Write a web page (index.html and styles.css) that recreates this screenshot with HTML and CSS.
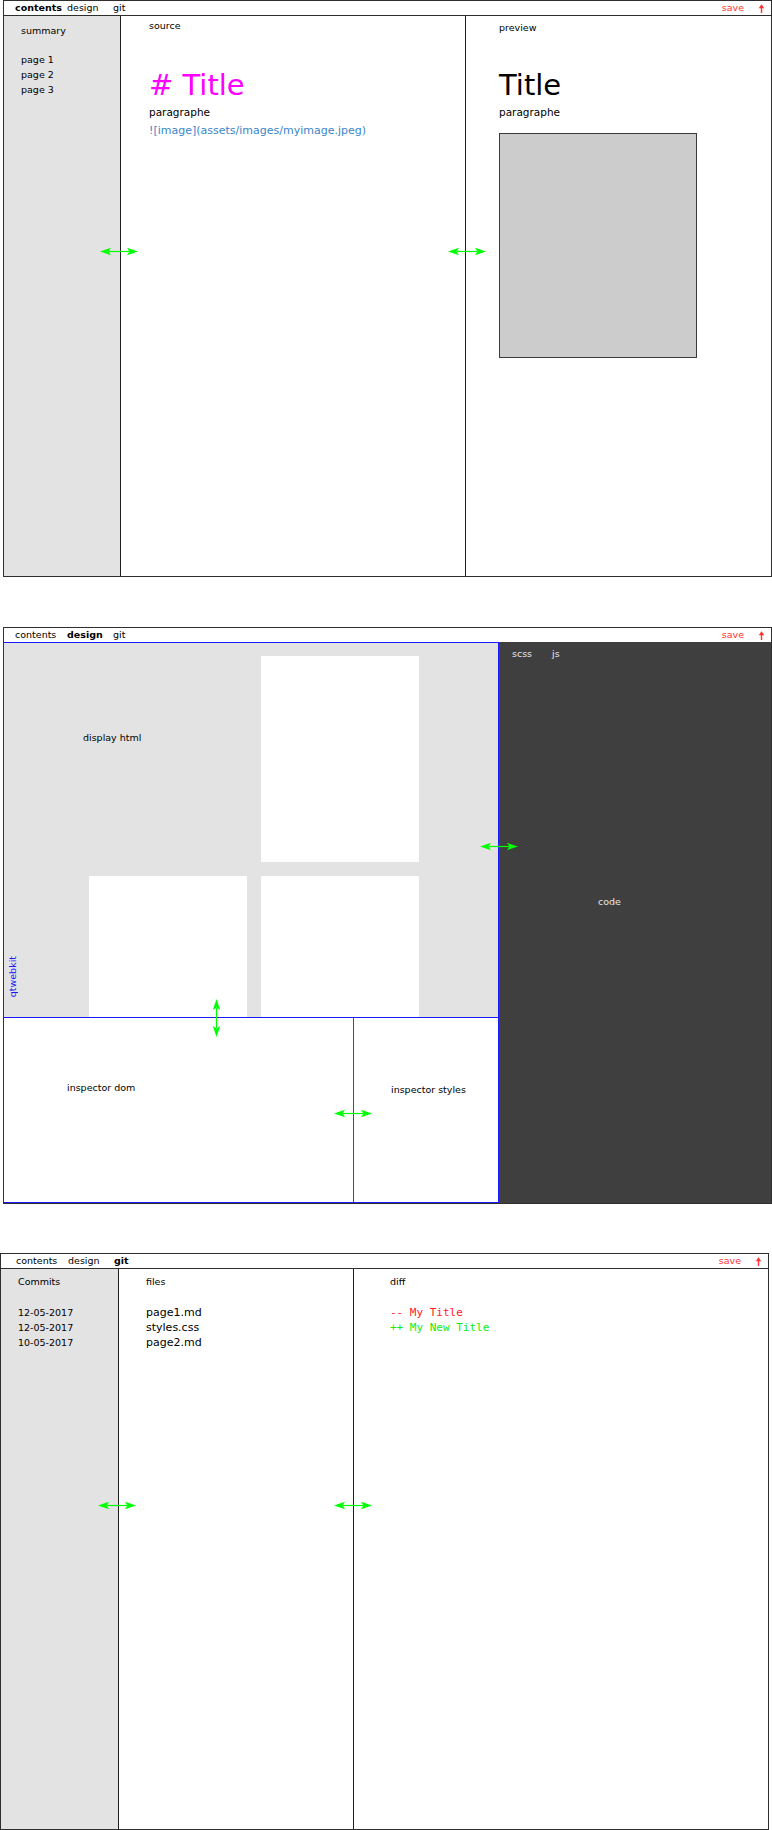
FILE: index.html
```html
<!DOCTYPE html>
<html>
<head>
<meta charset="utf-8">
<title>Mockup</title>
<link rel="stylesheet" href="styles.css">
</head>
<body>

<section class="frame frame-contents">
  <header class="bar">
    <span class="tab tab-contents active">contents</span>
    <span class="tab tab-design">design</span>
    <span class="tab tab-git">git</span>
    <span class="save">save</span>
    <svg class="upload" width="7" height="9" viewBox="0 0 7 9"><path d="M3.5 0.3L6.3 4.2H4.2V9H2.8V4.2H0.7Z" fill="#ff3333"/></svg>
  </header>
  <div class="body">
    <aside class="col sidebar">
      <div class="summary">summary</div>
      <ul class="list pages">
        <li>page 1</li>
        <li>page 2</li>
        <li>page 3</li>
      </ul>
    </aside>
    <div class="col source">
      <div class="label">source</div>
      <div class="md-title">&#35; Title</div>
      <div class="para">paragraphe</div>
      <div class="md-link">![image](assets/images/myimage.jpeg)</div>
    </div>
    <div class="col preview">
      <div class="label">preview</div>
      <h1 class="pv-title">Title</h1>
      <p class="para">paragraphe</p>
      <div class="pv-image"></div>
    </div>
    <svg class="harrow ha-c1" width="38" height="9" viewBox="0 0 38 9"><path d="M9 4.5H29" stroke="#00ff00" stroke-width="1.2"/><path d="M0 4.5L11 0.8L8.6 4.5L11 8.2Z M38 4.5L27 0.8L29.4 4.5L27 8.2Z" fill="#00ff00"/></svg>
    <svg class="harrow ha-c2" width="38" height="9" viewBox="0 0 38 9"><path d="M9 4.5H29" stroke="#00ff00" stroke-width="1.2"/><path d="M0 4.5L11 0.8L8.6 4.5L11 8.2Z M38 4.5L27 0.8L29.4 4.5L27 8.2Z" fill="#00ff00"/></svg>
  </div>
</section>

<section class="frame frame-design">
  <header class="bar bar-plain">
    <span class="tab tab-contents">contents</span>
    <span class="tab tab-design active">design</span>
    <span class="tab tab-git">git</span>
    <span class="save">save</span>
    <svg class="upload" width="7" height="9" viewBox="0 0 7 9"><path d="M3.5 0.3L6.3 4.2H4.2V9H2.8V4.2H0.7Z" fill="#ff3333"/></svg>
  </header>
  <div class="body body-design">
    <div class="webkit">
      <div class="view">
        <div class="view-label">display html</div>
        <div class="page-box box-a"></div>
        <div class="page-box box-b"></div>
        <div class="page-box box-c"></div>
        <div class="qtwebkit">qtwebkit</div>
      </div>
      <div class="inspector">
        <div class="insp-dom">inspector dom</div>
        <div class="insp-styles">inspector styles</div>
      </div>
      <svg class="varrow va-d1" width="9" height="38" viewBox="0 0 9 38"><path d="M4.5 9V29" stroke="#00ff00" stroke-width="1.2"/><path d="M4.5 0L0.8 11L4.5 8.6L8.2 11Z M4.5 38L0.8 27L4.5 29.4L8.2 27Z" fill="#00ff00"/></svg>
      <svg class="harrow ha-d2" width="38" height="9" viewBox="0 0 38 9"><path d="M9 4.5H29" stroke="#00ff00" stroke-width="1.2"/><path d="M0 4.5L11 0.8L8.6 4.5L11 8.2Z M38 4.5L27 0.8L29.4 4.5L27 8.2Z" fill="#00ff00"/></svg>
    </div>
    <div class="code-panel">
      <div class="code-tabs"><span>scss</span><span>js</span></div>
      <div class="code-label">code</div>
    </div>
    <svg class="harrow ha-d1" width="38" height="9" viewBox="0 0 38 9"><path d="M9 4.5H29" stroke="#00ff00" stroke-width="1.2"/><path d="M0 4.5L11 0.8L8.6 4.5L11 8.2Z M38 4.5L27 0.8L29.4 4.5L27 8.2Z" fill="#00ff00"/></svg>
  </div>
</section>

<section class="frame frame-git">
  <header class="bar">
    <span class="tab tab-contents">contents</span>
    <span class="tab tab-design">design</span>
    <span class="tab tab-git active">git</span>
    <span class="save">save</span>
    <svg class="upload" width="7" height="9" viewBox="0 0 7 9"><path d="M3.5 0.3L6.3 4.2H4.2V9H2.8V4.2H0.7Z" fill="#ff3333"/></svg>
  </header>
  <div class="body">
    <aside class="col sidebar sidebar-git">
      <div class="label">Commits</div>
      <ul class="list commits">
        <li>12-05-2017</li>
        <li>12-05-2017</li>
        <li>10-05-2017</li>
      </ul>
    </aside>
    <div class="col files">
      <div class="label">files</div>
      <ul class="list file-list">
        <li>page1.md</li>
        <li>styles.css</li>
        <li>page2.md</li>
      </ul>
    </div>
    <div class="col diff">
      <div class="label">diff</div>
      <div class="diff-lines">
        <div class="del">-- My Title</div>
        <div class="add">++ My New Title</div>
      </div>
    </div>
    <svg class="harrow ha-g1" width="38" height="9" viewBox="0 0 38 9"><path d="M9 4.5H29" stroke="#00ff00" stroke-width="1.2"/><path d="M0 4.5L11 0.8L8.6 4.5L11 8.2Z M38 4.5L27 0.8L29.4 4.5L27 8.2Z" fill="#00ff00"/></svg>
    <svg class="harrow ha-g2" width="38" height="9" viewBox="0 0 38 9"><path d="M9 4.5H29" stroke="#00ff00" stroke-width="1.2"/><path d="M0 4.5L11 0.8L8.6 4.5L11 8.2Z M38 4.5L27 0.8L29.4 4.5L27 8.2Z" fill="#00ff00"/></svg>
  </div>
</section>

</body>
</html>
```

FILE: styles.css
```css
* { box-sizing: border-box; }

html, body {
  margin: 0;
  padding: 0;
  background: #ffffff;
}

body {
  width: 772px;
  font-family: "DejaVu Sans", sans-serif;
  font-size: 9.5px;
  color: #000;
}

/* ---------- frames ---------- */
.frame {
  width: 769px;
  height: 577px;
  border: 1px solid #2e2e2e;
  display: flex;
  flex-direction: column;
}

.frame-contents { margin-left: 3px; }
.frame-design { margin-left: 3px; margin-top: 50px; border-left-color: #1a1aff; }
.frame-git { margin-left: 0; margin-top: 49px; }

/* ---------- top bar ---------- */
.bar {
  height: 15px;
  flex: none;
  display: flex;
  align-items: center;
  padding: 0 6px 0 11px;
  border-bottom: 1px solid #2e2e2e;
  line-height: 14px;
}

.bar-plain {
  height: 14px;
  border-bottom: none;
}

.frame-git .bar { padding-left: 15px; }

.tab { white-space: nowrap; }
.tab-contents { width: 52px; }
.tab-design { width: 46px; }
.tab.active { font-weight: bold; }

.save {
  margin-left: auto;
  color: #ff3333;
}

.upload {
  display: block;
  margin-left: 14px;
}

/* ---------- bodies ---------- */
.body {
  flex: 1;
  display: flex;
  position: relative;
  min-height: 0;
}

.col {
  height: 100%;
}

.sidebar {
  width: 117px;
  flex: none;
  background: #e3e3e3;
  border-right: 1px solid #1e1e1e;
  padding: 7px 0 0 17px;
  line-height: 15px;
}

.list {
  list-style: none;
  margin: 0;
  padding: 0;
}

.pages { margin-top: 14px; }

.label { line-height: 12px; }

.source {
  width: 345px;
  flex: none;
  border-right: 1px solid #1e1e1e;
  padding: 4px 0 0 28px;
}

.md-title {
  margin-top: 36px;
  font-size: 29px;
  line-height: 34px;
  color: #ff00ff;
}

.para {
  margin: 3px 0 0 0;
  font-size: 10.5px;
  line-height: 14px;
  color: #000;
}

.md-link {
  margin-top: 5px;
  font-size: 11px;
  line-height: 14px;
  color: #3a86c8;
}

.preview {
  flex: 1;
  padding: 6px 0 0 33px;
}

.pv-title {
  margin: 34px 0 0 0;
  font-size: 29px;
  line-height: 34px;
  font-weight: normal;
  color: #000;
}

.pv-image {
  margin-top: 14px;
  width: 198px;
  height: 225px;
  background: #cccccc;
  border: 1px solid #3a3a3a;
}

/* ---------- splitter arrows (overlays) ---------- */
.harrow, .varrow {
  position: absolute;
  display: block;
}

.ha-c1 { left: 96px; top: 231px; }
.ha-c2 { left: 444px; top: 231px; }

.ha-d1 { left: 476px; top: 200px; }
.va-d1 { left: 208px; top: 356px; }
.ha-d2 { left: 330px; top: 466px; }

.ha-g1 { left: 97px; top: 232px; }
.ha-g2 { left: 333px; top: 232px; }

/* ---------- design section ---------- */
.webkit {
  width: 495px;
  flex: none;
  position: relative;
  display: flex;
  flex-direction: column;
  border-top: 1px solid #1a1aff;
  border-right: 1px solid #1a1aff;
  border-bottom: 1px solid #1a1aff;
}

.view {
  height: 375px;
  flex: none;
  position: relative;
  background: #e3e3e3;
  border-bottom: 1px solid #1a1aff;
  display: grid;
  grid-template-columns: 158px 158px;
  grid-template-rows: 206px 1fr;
  column-gap: 14px;
  row-gap: 14px;
  padding: 13px 0 0 85px;
}

.page-box { background: #ffffff; }
.box-a { grid-column: 2; grid-row: 1; }
.box-b { grid-column: 1; grid-row: 2; }
.box-c { grid-column: 2; grid-row: 2; }

.view-label {
  grid-column: 1;
  grid-row: 1;
  margin: 76px 0 0 -6px;
  line-height: 12px;
  align-self: start;
}

.qtwebkit {
  position: absolute;
  left: 3px;
  bottom: 20px;
  writing-mode: vertical-rl;
  transform: rotate(180deg);
  line-height: 12px;
  color: #1a1aff;
}

.inspector {
  flex: 1;
  display: flex;
  background: #fff;
}

.insp-dom {
  width: 350px;
  flex: none;
  border-right: 1px solid #3a3aff;
  padding: 64px 0 0 63px;
  line-height: 12px;
}

.insp-styles {
  flex: 1;
  padding: 66px 0 0 37px;
  line-height: 12px;
}

.code-panel {
  flex: 1;
  background: #3f3f3f;
  color: #e6e6e6;
  padding: 6px 0 0 13px;
  line-height: 12px;
}

.code-tabs {
  display: flex;
  gap: 20px;
}

.code-label {
  margin: 236px 0 0 86px;
}

/* ---------- git section ---------- */
.sidebar-git {
  width: 118px;
  padding: 7px 0 0 17px;
}

.commits {
  margin-top: 17px;
  line-height: 15px;
}

.files {
  width: 235px;
  flex: none;
  border-right: 1px solid #1e1e1e;
  padding: 7px 0 0 27px;
}

.file-list {
  margin-top: 17px;
  font-size: 11px;
  line-height: 15px;
}

.diff {
  flex: 1;
  padding: 7px 0 0 36px;
}

.diff-lines {
  margin-top: 17px;
  font-family: "DejaVu Sans Mono", monospace;
  font-size: 11px;
  line-height: 15px;
}

.del { color: #ff2222; }
.add { color: #11ee11; }
```
